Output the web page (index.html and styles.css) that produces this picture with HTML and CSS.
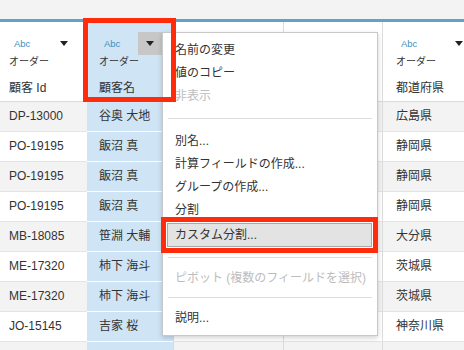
FILE: index.html
```html
<!DOCTYPE html>
<html lang="ja">
<head>
<meta charset="utf-8">
<title>Tableau field menu</title>
<link rel="stylesheet" href="styles.css">
</head>
<body>
<div class="app">
  <div class="topbar"></div>
  <div class="accent"></div>
  <div class="grid">
    <div class="col c1">
      <div class="head">
        <div class="type"><span class="abc">Abc</span><span class="drop"><svg width="8" height="5" viewBox="0 0 8 5"><path d="M0 0H8L4 5Z" fill="#222"/></svg></span></div>
        <div class="order">オーダー</div>
        <div class="name">顧客 Id</div>
      </div>
      <div class="cell">DP-13000</div>
      <div class="cell">PO-19195</div>
      <div class="cell">PO-19195</div>
      <div class="cell">PO-19195</div>
      <div class="cell">MB-18085</div>
      <div class="cell">ME-17320</div>
      <div class="cell">ME-17320</div>
      <div class="cell">JO-15145</div>
      <div class="cell"></div>
    </div>
    <div class="col c2">
      <div class="head">
        <div class="type"><span class="abc">Abc</span><span class="drop active"><svg width="8" height="5" viewBox="0 0 8 5"><path d="M0 0H8L4 5Z" fill="#222"/></svg></span></div>
        <div class="order">オーダー</div>
        <div class="name">顧客名</div>
      </div>
      <div class="cell">谷奥 大地</div>
      <div class="cell">飯沼 真</div>
      <div class="cell">飯沼 真</div>
      <div class="cell">飯沼 真</div>
      <div class="cell">笹淵 大輔</div>
      <div class="cell">柿下 海斗</div>
      <div class="cell">柿下 海斗</div>
      <div class="cell">吉家 桜</div>
      <div class="cell"></div>
    </div>
    <div class="col c3">
      <div class="head"></div>
      <div class="cell"></div><div class="cell"></div><div class="cell"></div>
      <div class="cell"></div><div class="cell"></div><div class="cell"></div>
      <div class="cell"></div><div class="cell"></div><div class="cell"></div>
    </div>
    <div class="col c4">
      <div class="head"></div>
      <div class="cell"></div><div class="cell"></div><div class="cell"></div>
      <div class="cell"></div><div class="cell"></div><div class="cell"></div>
      <div class="cell"></div><div class="cell"></div><div class="cell"></div>
    </div>
    <div class="col c5">
      <div class="head">
        <div class="type"><span class="abc">Abc</span><span class="drop"><svg width="8" height="5" viewBox="0 0 8 5"><path d="M0 0H8L4 5Z" fill="#222"/></svg></span></div>
        <div class="order">オーダー</div>
        <div class="name">都道府県</div>
      </div>
      <div class="cell">広島県</div>
      <div class="cell">静岡県</div>
      <div class="cell">静岡県</div>
      <div class="cell">静岡県</div>
      <div class="cell">大分県</div>
      <div class="cell">茨城県</div>
      <div class="cell">茨城県</div>
      <div class="cell">神奈川県</div>
      <div class="cell"></div>
    </div>
  </div>

  <div class="menu">
    <div class="item">名前の変更</div>
    <div class="item">値のコピー</div>
    <div class="item disabled">非表示</div>
    <div class="sep sep1"></div>
    <div class="item">別名...</div>
    <div class="item">計算フィールドの作成...</div>
    <div class="item">グループの作成...</div>
    <div class="item">分割</div>
    <div class="item hover">カスタム分割...</div>
    <div class="sep sep2"></div>
    <div class="item disabled">ピボット (複数のフィールドを選択)</div>
    <div class="sep sep3"></div>
    <div class="item">説明...</div>
  </div>

  <div class="mark mark-col"></div>
  <div class="mark mark-item"></div>
</div>
</body>
</html>
```

FILE: styles.css
```css
* { box-sizing: border-box; }

body {
  margin: 0;
  overflow: hidden;
  background: #fff;
  color: #333;
  font-family: "Liberation Sans", "Noto Sans CJK JP", sans-serif;
}

.app {
  position: relative;
  width: 464px;
  height: 350px;
  overflow: hidden;
}

.topbar { height: 19px; background: #f3f3f3; }
.accent { height: 3px; background: #62a2c7; }

.grid {
  display: grid;
  grid-template-columns: 87px 86px 110px 99px 100px;
  width: 482px;
}

.col { display: flex; flex-direction: column; }
.c3, .c4, .c5 { border-left: 1px solid #dcdcdc; }

.head {
  height: 80px;
  border-bottom: 1px solid #dcdcdc;
  padding-top: 10px;
  padding-right: 11px;
}

.c1 .head, .c1 .cell { padding-left: 9px; }
.c2 .head, .c2 .cell { padding-left: 12px; }
.c5 .head, .c5 .cell { padding-left: 13px; }

.type {
  display: flex;
  align-items: center;
  justify-content: space-between;
  height: 23px;
}

.abc {
  margin-left: 5px;
  font-size: 9.5px;
  color: #3f8fbf;
}

.drop {
  width: 24px;
  height: 23px;
  display: flex;
  align-items: center;
  justify-content: center;
}
.drop.active { background: #c7c7c7; }

.order {
  margin-top: 1px;
  font-size: 10px;
  line-height: 12px;
}

.name {
  margin-top: 12px;
  font-size: 12px;
  line-height: 16px;
  white-space: nowrap;
}

.cell {
  height: 30px;
  border-bottom: 1px solid #e4e4e4;
  font-size: 12px;
  line-height: 29px;
  white-space: nowrap;
  background: #fff;
}

.c1 .cell:nth-child(even),
.c3 .cell:nth-child(even),
.c4 .cell:nth-child(even),
.c5 .cell:nth-child(even) { background: #f3f3f3; }

.c2 .head { background: #cfe4f5; }
.c2 .cell { background: #cfe4f5; border-bottom-color: #fff; }

/* context menu */
.menu {
  position: absolute;
  left: 162px;
  top: 32px;
  width: 216px;
  height: 304px;
  background: #fff;
  border: 1px solid #c8c8c8;
  box-shadow: 0 2px 5px rgba(0, 0, 0, 0.18);
  padding: 6px 0 0;
  font-size: 12px;
  z-index: 2;
}

.item {
  height: 23px;
  line-height: 23px;
  padding-left: 12px;
  white-space: nowrap;
  color: #333;
}
.item.disabled { color: #bdbdbd; }
.item.hover {
  margin: 1px 5px 0 4px;
  padding-left: 7px;
  height: 24px;
  line-height: 22px;
  background: #e3e3e3;
  border: 1px solid #a9a9a9;
}

.sep {
  height: 1px;
  margin: 10px 5px 11px;
  background: #dedede;
}
.sep2 { margin: 10px 5px 9px; }
.sep3 { margin: 7px 5px 9px; }

/* red annotation boxes */
.mark {
  position: absolute;
  border: 5px solid #ff2b0a;
  z-index: 3;
}
.mark-col { left: 83px; top: 18px; width: 93px; height: 84px; }
.mark-item { left: 161px; top: 217px; width: 217px; height: 36px; }
```
